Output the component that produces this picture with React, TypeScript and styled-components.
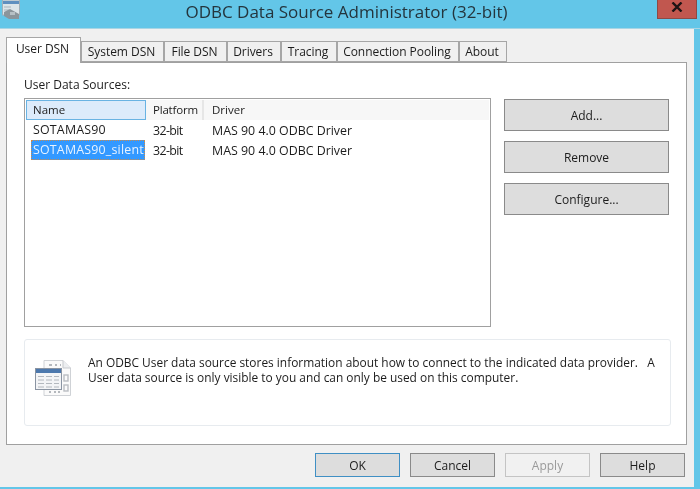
import styled, { createGlobalStyle } from 'styled-components';

const GlobalStyle = createGlobalStyle`
  html, body {
    margin: 0;
    padding: 0;
    background: #63c6e8;
  }
  * {
    box-sizing: border-box;
  }
`;

const tabs = [
  { label: 'User DSN', width: 75 },
  { label: 'System DSN', width: 83 },
  { label: 'File DSN', width: 63 },
  { label: 'Drivers', width: 54 },
  { label: 'Tracing', width: 56 },
  { label: 'Connection Pooling', width: 122 },
  { label: 'About', width: 48 },
];

const sources = [
  { name: 'SOTAMAS90', platform: '32-bit', driver: 'MAS 90 4.0 ODBC Driver' },
  { name: 'SOTAMAS90_silent', platform: '32-bit', driver: 'MAS 90 4.0 ODBC Driver', selected: true },
];

const AppIcon = () => (
  <svg width="20" height="20" viewBox="0 0 20 20">
    <rect x="1.5" y="0" width="17" height="15" fill="#dce4e8" stroke="#9fb0ba" />
    <rect x="2" y="1" width="16" height="3" fill="#5f8fbf" />
    <path d="M3 7h7M3 10h5" stroke="#a9b4bb" />
    <path d="M3 12l6-3 9 5v5H8l-5-3z" fill="#8b959b" />
    <rect x="9" y="12" width="5" height="3" fill="#b7c0c5" />
  </svg>
);

const TableFileIcon = () => (
  <svg width="37" height="38" viewBox="0 0 37 38">
    <path d="M9 1.5h19l7.5 7.5v27.5H9z" fill="#fafafa" stroke="#cfd2d6" />
    <path d="M28 1.5V9h7.5" fill="#eceef0" stroke="#c6c9cd" />
    <path d="M14 6h3M20 6h2M25 6h1" stroke="#b4b8bd" strokeWidth="2" />
    <rect x="29" y="16" width="4" height="6" fill="none" stroke="#b9bdc2" strokeWidth="1.4" />
    <rect x="29" y="26" width="4" height="6" fill="none" stroke="#b9bdc2" strokeWidth="1.4" />
    <path d="M14 33h2M19 33h2M23 33h2" stroke="#b4b8bd" strokeWidth="2" />
    <rect x="0.5" y="9.5" width="26" height="21" fill="#f3f4f6" stroke="#8a94a2" />
    <rect x="1" y="10" width="25" height="4" fill="#4c78ad" />
    <path
      d="M3 17.5h6M11 17.5h6M19 17.5h5M3 21h6M11 21h6M19 21h5M3 24.5h6M11 24.5h6M19 24.5h5M3 28h6M11 28h6M19 28h5"
      stroke="#b3b8be"
      strokeWidth="1.2"
    />
  </svg>
);

export default function App() {
  return (
    <Screen>
      <GlobalStyle />
      <TitleBar>
        <TitleIcon>
          <AppIcon />
        </TitleIcon>
        <Title>ODBC Data Source Administrator (32-bit)</Title>
        <CloseButton>
          <svg width="12" height="10" viewBox="0 0 12 10">
            <path d="M1.5 0.5l9 9M10.5 0.5l-9 9" stroke="#1d1414" strokeWidth="2.4" />
          </svg>
        </CloseButton>
      </TitleBar>
      <Dialog>
        <TabStrip>
          {tabs.map((tab, i) => (
            <Tab key={tab.label} $width={tab.width} $active={i === 0}>
              {tab.label}
            </Tab>
          ))}
        </TabStrip>
        <TabPage>
          <SourcesLabel>User Data Sources:</SourcesLabel>
          <SourcesRow>
            <ListView>
              <ListHeader>
                <HeaderCell $width={120} $hot>
                  Name
                </HeaderCell>
                <HeaderCell $width={57} $tight>
                  Platform
                </HeaderCell>
                <HeaderCell $grow>Driver</HeaderCell>
              </ListHeader>
              {sources.map((s) => (
                <ListRow key={s.name}>
                  <NameCell $selected={s.selected}>{s.name}</NameCell>
                  <PlatformCell>{s.platform}</PlatformCell>
                  <span>{s.driver}</span>
                </ListRow>
              ))}
            </ListView>
            <SideButtons>
              <PushButton $side>Add...</PushButton>
              <PushButton $side>Remove</PushButton>
              <PushButton $side>Configure...</PushButton>
            </SideButtons>
          </SourcesRow>
          <InfoBox>
            <TableFileIcon />
            <InfoText>
              <div>An ODBC User data source stores information about how to connect to the indicated data provider.&nbsp;&nbsp; A</div>
              <div>User data source is only visible to you and can only be used on this computer.</div>
            </InfoText>
          </InfoBox>
        </TabPage>
        <Footer>
          <PushButton $default>OK</PushButton>
          <PushButton>Cancel</PushButton>
          <PushButton $disabled>Apply</PushButton>
          <PushButton>Help</PushButton>
        </Footer>
      </Dialog>
    </Screen>
  );
}

const Screen = styled('div')`
  width: 700px;
  height: 489px;
  overflow: hidden;
  background: #63c6e8;
  font-family: 'Open Sans', 'Liberation Sans', sans-serif;
  font-size: 12px;
  color: #1c1c1c;
  filter: blur(0.35px);
`;

const TitleBar = styled('div')`
  height: 29px;
  display: grid;
  grid-template-columns: 60px 1fr 60px;
  align-items: start;
  border-bottom: 1px solid #a9d5e4;
`;

const TitleIcon = styled('div')`
  padding: 0 0 0 1px;
  height: 20px;
  overflow: hidden;
`;

const Title = styled('div')`
  font-size: 17px;
  line-height: 23px;
  text-align: center;
  color: #24353d;
  padding-right: 7px;
`;

const CloseButton = styled('div')`
  width: 40px;
  height: 19px;
  margin-left: 17px;
  background: #c1574f;
  border: 1px solid #8d4a45;
  border-top: 0;
  display: flex;
  align-items: center;
  justify-content: center;
  padding-bottom: 5px;
`;

const Dialog = styled('div')`
  width: 694px;
  height: 458px;
  background: #f0f0f0;
  padding: 8px 0 0 6px;
`;

const TabStrip = styled('div')`
  display: flex;
  align-items: flex-end;
  height: 25px;
`;

const Tab = styled('div')<{ $width: number; $active?: boolean }>`
  width: ${(p) => p.$width}px;
  height: ${(p) => (p.$active ? 26 : 21)}px;
  margin-bottom: ${(p) => (p.$active ? -1 : 0)}px;
  background: ${(p) => (p.$active ? '#ffffff' : '#f0f0f0')};
  border: 1px solid #a6a6a6;
  border-bottom: ${(p) => (p.$active ? '0' : '1px solid #a6a6a6')};
  position: relative;
  z-index: ${(p) => (p.$active ? 1 : 0)};
  display: flex;
  align-items: center;
  justify-content: center;
  padding-bottom: ${(p) => (p.$active ? 4 : 1)}px;
  padding-right: 2px;
  font-size: 12px;
  letter-spacing: -0.05px;
  white-space: nowrap;
`;

const TabPage = styled('div')`
  width: 681px;
  height: 383px;
  background: #ffffff;
  border: 1px solid #a0a0a0;
  padding: 13px 17px 0;
`;

const SourcesLabel = styled('div')`
  line-height: 17px;
  height: 22px;
`;

const SourcesRow = styled('div')`
  display: flex;
  gap: 13px;
  height: 229px;
`;

const ListView = styled('div')`
  width: 467px;
  height: 229px;
  border: 1px solid #a0a0a0;
  padding: 1px 1px 0 1px;
  font-size: 12.4px;
`;

const ListHeader = styled('div')`
  display: flex;
  height: 20px;
  background: #f7f7f7;
  font-size: 11.5px;
`;

const HeaderCell = styled('div')<{ $width?: number; $grow?: boolean; $hot?: boolean; $tight?: boolean }>`
  width: ${(p) => (p.$width ? `${p.$width}px` : 'auto')};
  flex: ${(p) => (p.$grow ? 1 : 'none')};
  background: ${(p) => (p.$hot ? '#dcebfb' : 'transparent')};
  border: ${(p) => (p.$hot ? '1px solid #69b3e3' : '0')};
  border-right: ${(p) => (p.$hot ? '1px solid #69b3e3' : p.$grow ? '0' : '2px solid #e6e6e6')};
  padding-left: ${(p) => (p.$hot ? 6 : p.$tight ? 6 : 7)}px;
  line-height: ${(p) => (p.$hot ? 18 : 20)}px;
  margin-right: 1px;
  letter-spacing: ${(p) => (p.$tight ? -0.2 : 0)}px;
`;

const ListRow = styled('div')`
  display: flex;
  align-items: center;
  height: 20px;
  white-space: nowrap;
`;

const NameCell = styled('span')<{ $selected?: boolean }>`
  width: 114px;
  height: 20px;
  margin-left: 5px;
  padding-left: 2px;
  line-height: 19px;
  letter-spacing: 0.2px;
  background: ${(p) => (p.$selected ? '#3399ff' : 'transparent')};
  color: ${(p) => (p.$selected ? '#e8f3ff' : 'inherit')};
  outline: ${(p) => (p.$selected ? '1px dotted #c98a4a' : '0')};
  outline-offset: -1px;
  overflow: hidden;
`;

const PlatformCell = styled('span')`
  width: 67px;
  padding-left: 8px;
  letter-spacing: -0.6px;
`;

const SideButtons = styled('div')`
  display: flex;
  flex-direction: column;
  gap: 10px;
  padding-top: 1px;
`;

const PushButton = styled('div')<{ $side?: boolean; $default?: boolean; $disabled?: boolean }>`
  width: ${(p) => (p.$side ? 165 : 85)}px;
  height: ${(p) => (p.$side ? 32 : 24)}px;
  display: flex;
  align-items: center;
  justify-content: center;
  background: ${(p) => (p.$disabled ? '#f1f1f1' : '#dddddd')};
  border: 1px solid ${(p) => (p.$default ? '#3f8fc4' : p.$disabled ? '#c4c4c4' : '#8a8a8a')};
  color: ${(p) => (p.$disabled ? '#9a9a9a' : '#1c1c1c')};
`;

const InfoBox = styled('div')`
  width: 647px;
  height: 87px;
  margin-top: 12px;
  border: 1px solid #e7ebef;
  border-radius: 3px;
  display: flex;
  align-items: flex-start;
  padding: 19px 0 0 10px;
  gap: 16px;
`;

const InfoText = styled('div')`
  line-height: 15px;
  margin-top: -4px;
  white-space: nowrap;
  font-size: 11.92px;
`;

const Footer = styled('div')`
  display: flex;
  justify-content: flex-end;
  gap: 10px;
  width: 679px;
  margin-top: 8px;
`;
